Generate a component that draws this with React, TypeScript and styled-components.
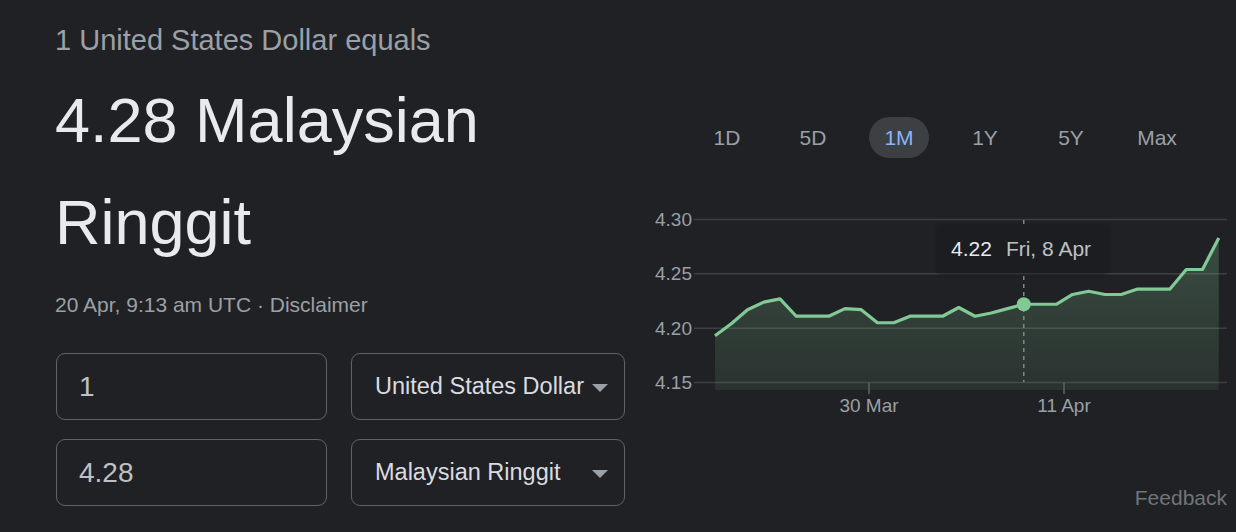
import styled, { createGlobalStyle } from "styled-components";

const GlobalStyle = createGlobalStyle`
  html, body {
    margin: 0;
    padding: 0;
    background: #202124;
  }
  body {
    font-family: "Liberation Sans", Arial, sans-serif;
    width: 1236px;
    height: 532px;
    overflow: hidden;
  }
`;

const Page = styled.div`
  display: flex;
  align-items: flex-start;
  gap: 15px;
  padding-left: 55px;
  height: 532px;
  box-sizing: border-box;
  background: #202124;
`;

const LeftColumn = styled.div`
  width: 570px;
  padding-top: 22px;
  display: flex;
  flex-direction: column;
`;

const Subtitle = styled.div`
  font-size: 29px;
  line-height: 36px;
  color: #9aa0a6;
`;

const Result = styled.div`
  margin-top: 11px;
  font-size: 63px;
  line-height: 102px;
  color: #e8eaed;
`;

const Meta = styled.div`
  margin-top: 18px;
  font-size: 21px;
  line-height: 28px;
  color: #9aa0a6;
`;

const Form = styled.div`
  margin-top: 34px;
  margin-left: 1px;
  display: grid;
  grid-template-columns: 271px 274px;
  column-gap: 24px;
  row-gap: 19px;
`;

const Field = styled.div`
  height: 67px;
  box-sizing: border-box;
  border: 1px solid #5f6368;
  border-radius: 9px;
  display: flex;
  align-items: center;
  padding-left: 22px;
  font-size: 28px;
  color: #bdc1c6;
`;

const Select = styled.div`
  position: relative;
  height: 67px;
  box-sizing: border-box;
  border: 1px solid #5f6368;
  border-radius: 9px;
  display: flex;
  align-items: center;
  padding-left: 23px;
  font-size: 23.5px;
  color: #dadce0;
`;

const Caret = styled.span`
  position: absolute;
  right: 16px;
  top: 30px;
  width: 0;
  height: 0;
  border-left: 8px solid transparent;
  border-right: 8px solid transparent;
  border-top: 8px solid #9aa0a6;
`;

const RightColumn = styled.div`
  width: 596px;
  padding-top: 117px;
  display: flex;
  flex-direction: column;
`;

const Tabs = styled.div`
  display: flex;
  margin-left: 44px;
`;

const Tab = styled.div`
  width: 86px;
  display: flex;
  justify-content: center;
`;

const Pill = styled.span<{ $active?: boolean }>`
  height: 41px;
  padding: 0 15px;
  border-radius: 21px;
  display: flex;
  align-items: center;
  font-size: 21px;
  color: ${(p) => (p.$active ? "#8ab4f8" : "#9aa0a6")};
  background: ${(p) => (p.$active ? "#3c4043" : "transparent")};
`;

const ChartBox = styled.div`
  position: relative;
  margin-top: 42px;
  width: 596px;
  height: 220px;
`;

const Tooltip = styled.div`
  position: absolute;
  left: 298px;
  top: 25px;
  width: 170px;
  height: 48px;
  box-sizing: border-box;
  padding-left: 13px;
  display: flex;
  align-items: center;
  gap: 14px;
  background: #1c1d20;
  box-shadow: 0 1px 4px rgba(0, 0, 0, 0.35);
  font-size: 21px;
  white-space: nowrap;
`;

const TipValue = styled.span`
  color: #e8eaed;
`;

const TipDate = styled.span`
  color: #bdc1c6;
`;

const Feedback = styled.div`
  margin-top: 64px;
  align-self: flex-end;
  margin-right: 9px;
  font-size: 21px;
  line-height: 28px;
  color: #70757a;
`;

const tabs = ["1D", "5D", "1M", "1Y", "5Y", "Max"];

const values = [
  4.193, 4.204, 4.217, 4.224, 4.227, 4.211, 4.211, 4.211, 4.218, 4.217,
  4.205, 4.205, 4.211, 4.211, 4.211, 4.219, 4.211, 4.214, 4.218, 4.222,
  4.222, 4.222, 4.231, 4.234, 4.231, 4.231, 4.236, 4.236, 4.236, 4.254,
  4.254, 4.283,
];

const X0 = 75;
const STEP = 16.25;
const yOf = (v: number) => 19.5 + (4.3 - v) * 1086.7;
const BOTTOM = 190;

const axis = [4.3, 4.25, 4.2, 4.15];

function Chart() {
  const pts = values.map((v, i) => [X0 + i * STEP, yOf(v)] as const);
  const line = pts.map(([x, y]) => `${x.toFixed(2)},${y.toFixed(2)}`).join(" ");
  const lastX = pts[pts.length - 1][0];
  const area = `${X0},${BOTTOM} ${line} ${lastX},${BOTTOM}`;
  const [hx, hy] = pts[19];

  return (
    <svg width="596" height="220" viewBox="0 0 596 220">
      <defs>
        <linearGradient id="fill" x1="0" y1="0" x2="0" y2="1">
          <stop offset="0" stopColor="#81c995" stopOpacity="0.26" />
          <stop offset="1" stopColor="#81c995" stopOpacity="0.1" />
        </linearGradient>
      </defs>
      {axis.map((v) => (
        <g key={v}>
          <line x1="54" x2="587" y1={yOf(v)} y2={yOf(v)} stroke="#3c4043" strokeWidth="1.5" />
          <text
            x="52"
            y={yOf(v) + 6.5}
            textAnchor="end"
            fontSize="19"
            fill="#9aa0a6"
            fontFamily="Liberation Sans, Arial, sans-serif"
          >
            {v.toFixed(2)}
          </text>
        </g>
      ))}
      <polygon points={area} fill="url(#fill)" />
      <line x1="229" x2="229" y1={yOf(4.15)} y2="194" stroke="#5f6368" strokeWidth="1.5" />
      <line x1="424" x2="424" y1={yOf(4.15)} y2="194" stroke="#5f6368" strokeWidth="1.5" />
      <text x="229" y="212" textAnchor="middle" fontSize="19" fill="#9aa0a6" fontFamily="Liberation Sans, Arial, sans-serif">
        30 Mar
      </text>
      <text x="424" y="212" textAnchor="middle" fontSize="19" fill="#9aa0a6" fontFamily="Liberation Sans, Arial, sans-serif">
        11 Apr
      </text>
      <line x1={hx} x2={hx} y1="20" y2="182" stroke="#80868b" strokeWidth="1.5" strokeDasharray="4 4" />
      <polyline points={line} fill="none" stroke="#81c995" strokeWidth="3.2" strokeLinejoin="round" />
      <circle cx={hx} cy={hy} r="7" fill="#81c995" />
    </svg>
  );
}

export default function App() {
  return (
    <>
      <GlobalStyle />
      <Page>
        <LeftColumn>
          <Subtitle>1 United States Dollar equals</Subtitle>
          <Result>
            4.28 Malaysian
            <br />
            Ringgit
          </Result>
          <Meta>20 Apr, 9:13 am UTC · Disclaimer</Meta>
          <Form>
            <Field>1</Field>
            <Select>
              United States Dollar
              <Caret />
            </Select>
            <Field>4.28</Field>
            <Select>
              Malaysian Ringgit
              <Caret />
            </Select>
          </Form>
        </LeftColumn>
        <RightColumn>
          <Tabs>
            {tabs.map((t) => (
              <Tab key={t}>
                <Pill $active={t === "1M"}>{t}</Pill>
              </Tab>
            ))}
          </Tabs>
          <ChartBox>
            <Chart />
            <Tooltip>
              <TipValue>4.22</TipValue>
              <TipDate>Fri, 8 Apr</TipDate>
            </Tooltip>
          </ChartBox>
          <Feedback>Feedback</Feedback>
        </RightColumn>
      </Page>
    </>
  );
}
